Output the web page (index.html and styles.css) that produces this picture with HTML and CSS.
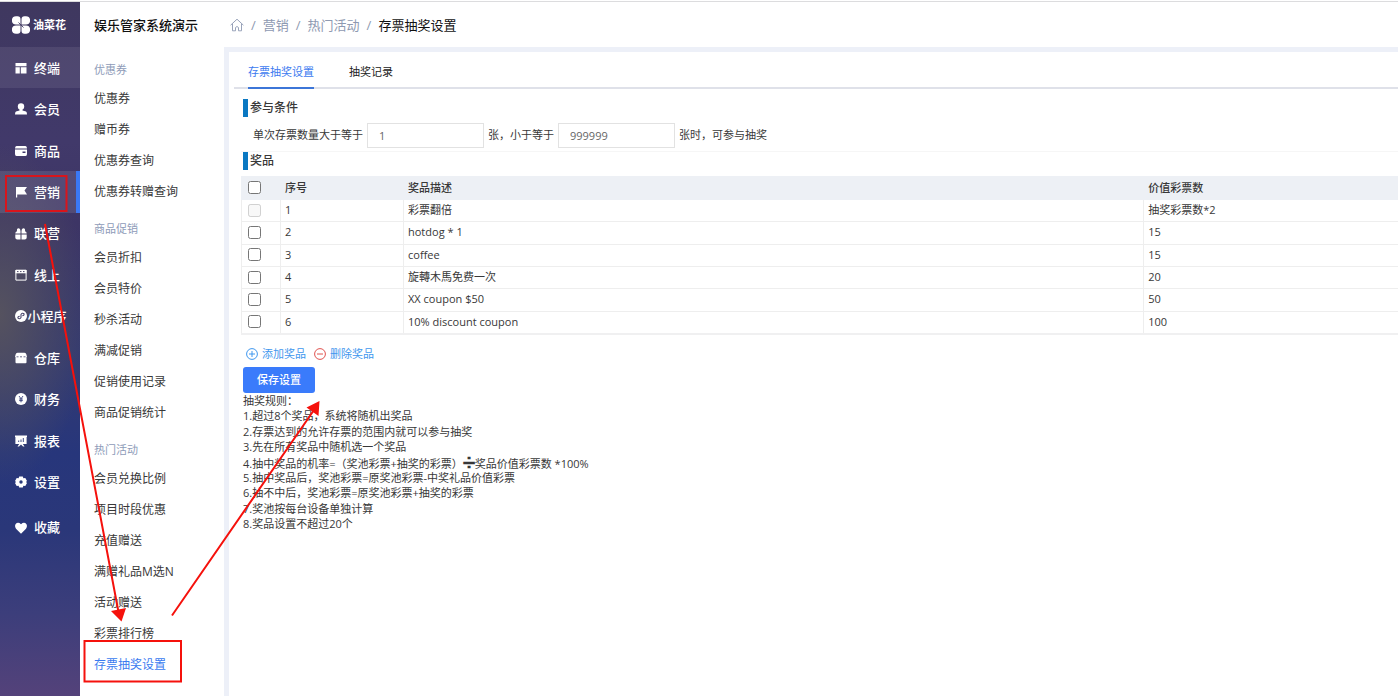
FILE: index.html
```html
<!DOCTYPE html>
<html lang="zh-CN">
<head>
<meta charset="utf-8">
<title>存票抽奖设置</title>
<link rel="stylesheet" href="styles.css">
</head>
<body>
<div class="app">
  <aside class="rail">
    <div class="brand">
      <svg class="brand-mark" viewBox="0 0 18 18" fill="#fff" aria-hidden="true"><path d="M4 .3h1.500A3 3 0 0 1 8.500 3.300V8.500H4A4 4 0 0 1 4 .3zM9.500 8.500V3.300a3 3 0 0 1 3-3H14a4 4 0 0 1 0 8.200zM8.500 9.500v5.200a3 3 0 0 1-3 3H4a4 4 0 0 1 0-8.200zM9.500 9.500H14a4 4 0 0 1 0 8.200h-1.500a3 3 0 0 1-3-3z"/><path d="M6.500 6.500l5 5" stroke="#413a63" stroke-width=".9"/></svg>
      <span>油菜花</span>
    </div>
    <nav>
      <ul class="rail-list">
        <li><a class="rail-item is-hover" href="#"><svg viewBox="0 0 12 12" fill="#fff"><path d="M.5 1h11v3.200H.5zM.5 5.200h4.300v6.300H.5zM5.800 5.200h5.700v6.300H5.800z"/></svg><span>终端</span></a></li>
        <li><a class="rail-item" href="#"><svg viewBox="0 0 12 12" fill="#fff"><circle cx="6" cy="3.400" r="3.200"/><path d="M4.500 5h3v2.500l3.500 1q1 .5 1 2.900H0Q0 9 1 8.500l3.500-1z"/></svg><span>会员</span></a></li>
        <li><a class="rail-item" href="#"><svg viewBox="0 0 12 12"><path d="M1.500 1h9Q12 1.200 12 3.500H0Q0 1.200 1.500 1zM0 4.500h12V9q0 2-1.500 2h-9Q0 11 0 9z" fill="#fff"/><path d="M7.500 6.500h3V8h-3z" fill="#41386a"/></svg><span>商品</span></a></li>
        <li><a class="rail-item is-active" href="#"><svg viewBox="0 0 12 12" fill="#fff"><path d="M1 1h1.200v10.500H1zM2 1h10L9.500 4.500 12 8.500H2z"/></svg><span>营销</span></a></li>
        <li><a class="rail-item" href="#"><svg viewBox="0 0 12 12" fill="#fff"><path d="M5.500 5.500H.3Q.3 3.600 2 3.300 1.500.3 3.600.3 5.500.5 5.500 3zM6.500 5.500h5.200q0-1.900-1.700-2.200Q10.500.3 8.400.3 6.500.5 6.500 3zM.3 6.500h5.200v5H2.300q-2 0-2-2zM6.500 6.500h5.200v3q0 2-2 2H6.500z"/></svg><span>联营</span></a></li>
        <li><a class="rail-item" href="#"><svg viewBox="0 0 12 12"><path d="M.9 1.200h10.200v9.900H.9z" fill="none" stroke="#fff"/><path d="M.5 1h11v3.300H.5z" fill="#fff"/><path d="M2 2.600h1.500M5 2.600h1.500M8 2.600h1.500" stroke="#4a4668"/></svg><span>线上</span></a></li>
        <li><a class="rail-item" href="#"><svg viewBox="0 0 12 12"><circle cx="6" cy="6" r="6" fill="#fff"/><path d="M4.700 6.200Q2.500 6.500 3 8.200 4.700 9.600 6 7.500V4.500Q7.200 2.500 9 3.800 9.400 5.500 7.300 5.800" fill="none" stroke="#48456b" stroke-width="1.100"/></svg><span>小程序</span></a></li>
        <li><a class="rail-item" href="#"><svg viewBox="0 0 12 12"><path d="M2.500.8h7Q11 .8 11.400 2.500L12 5h-.5v5.300q0 1-1 1h-9q-1 0-1-1V5H0L.6 2.500Q1 .8 2.500.8z" fill="#fff"/><path d="M1.500 4.800h2M5 4.800h2M8.500 4.800h2" stroke="#45446f" stroke-width=".8"/></svg><span>仓库</span></a></li>
        <li><a class="rail-item" href="#"><svg viewBox="0 0 12 12"><circle cx="6" cy="6" r="6" fill="#fff"/><path d="M4 3l2 2.800L8 3M6 5.800V9.300M4.200 6h3.600M4.200 7.600h3.600" fill="none" stroke="#343d78" stroke-width=".9"/></svg><span>财务</span></a></li>
        <li><a class="rail-item" href="#"><svg viewBox="0 0 12 12"><path d="M0 .5h12V2h-.4v7H7.800l1.700 2.500H8L6 9.500l-2 2H2.500L4.200 9H.4V2H0z" fill="#fff"/><path d="M3.700 5.500V7M6 4.500V7M8.300 3v4" stroke="#2c3b7b" stroke-width=".9"/></svg><span>报表</span></a></li>
        <li><a class="rail-item" href="#"><svg viewBox="0 0 12 12"><path d="M4.200.5h3.600l.6 1.700 1.900-.3L12 5l-1 1 1 1-1.700 3.100-1.900-.3-.6 1.700H4.200l-.6-1.700-1.900.3L0 7l1-1-1-1 1.700-3.100 1.900.3z" fill="#fff"/><circle cx="6" cy="6" r="1.700" fill="#29397b"/></svg><span>设置</span></a></li>
      </ul>
      <a class="rail-item rail-fav" href="#"><svg viewBox="0 0 12 12" fill="#fff"><path d="M6 11.700L1 6.700Q-.6 4.500.5 2.300 2.800-.6 6 2.200 9.200-.6 11.500 2.300 12.600 4.500 11 6.700z"/></svg><span>收藏</span></a>
    </nav>
  </aside>

  <aside class="menu">
    <h1 class="menu-title">娱乐管家系统演示</h1>
    <nav>
      <section class="menu-group">
        <h2>优惠券</h2>
        <a href="#">优惠券</a><a href="#">赠币券</a><a href="#">优惠券查询</a><a href="#">优惠券转赠查询</a>
      </section>
      <section class="menu-group">
        <h2>商品促销</h2>
        <a href="#">会员折扣</a><a href="#">会员特价</a><a href="#">秒杀活动</a><a href="#">满减促销</a><a href="#">促销使用记录</a><a href="#">商品促销统计</a>
      </section>
      <section class="menu-group">
        <h2>热门活动</h2>
        <a href="#">会员兑换比例</a><a href="#">项目时段优惠</a><a href="#">充值赠送</a><a href="#">满赠礼品M选N</a><a href="#">活动赠送</a><a href="#">彩票排行榜</a><a class="is-current" href="#">存票抽奖设置</a>
      </section>
    </nav>
  </aside>

  <div class="page">
    <nav class="crumbs" aria-label="面包屑">
      <a href="#" aria-label="首页"><svg viewBox="0 0 14 14" fill="none" stroke="#99a3ba"><path d="M.6 7.200L7 1.200l6.400 6M2.500 6v6.800h3V9.500q1.500-2 3 0v3.300h3V6"/></svg></a>
      <i>/</i><a href="#">营销</a><i>/</i><a href="#">热门活动</a><i>/</i><b>存票抽奖设置</b>
    </nav>
    <main class="panel">
      <nav class="tabs">
        <a class="tab is-on" href="#">存票抽奖设置</a>
        <a class="tab" href="#">抽奖记录</a>
      </nav>
      <form class="form">
        <h3 class="sec">参与条件</h3>
        <div class="cond">
          <label for="min">单次存票数量大于等于</label>
          <input id="min" type="text" value="1">
          <label for="max">张，小于等于</label>
          <input id="max" type="text" value="999999">
          <span>张时，可参与抽奖</span>
        </div>
        <h3 class="sec">奖品</h3>
        <table class="prizes">
          <colgroup><col class="c-check"><col class="c-no"><col class="c-desc"><col></colgroup>
          <thead>
            <tr><th><input type="checkbox" aria-label="全选"></th><th>序号</th><th>奖品描述</th><th>价值彩票数</th></tr>
          </thead>
          <tbody>
            <tr><td><input type="checkbox" aria-label="选择 1" disabled></td><td>1</td><td>彩票翻倍</td><td>抽奖彩票数*2</td></tr>
            <tr><td><input type="checkbox" aria-label="选择 2"></td><td>2</td><td>hotdog * 1</td><td>15</td></tr>
            <tr><td><input type="checkbox" aria-label="选择 3"></td><td>3</td><td>coffee</td><td>15</td></tr>
            <tr><td><input type="checkbox" aria-label="选择 4"></td><td>4</td><td>旋轉木馬免费一次</td><td>20</td></tr>
            <tr><td><input type="checkbox" aria-label="选择 5"></td><td>5</td><td>XX coupon $50</td><td>50</td></tr>
            <tr><td><input type="checkbox" aria-label="选择 6"></td><td>6</td><td>10% discount coupon</td><td>100</td></tr>
          </tbody>
        </table>
        <div class="acts">
          <button type="button" class="act"><svg viewBox="0 0 12 12" fill="none" stroke="#3f97ee"><circle cx="6" cy="6" r="5.400"/><path d="M3 6h6M6 3v6"/></svg>添加奖品</button>
          <button type="button" class="act"><svg viewBox="0 0 12 12" fill="none" stroke="#e0524f"><circle cx="6" cy="6" r="5.400"/><path d="M3 6h6"/></svg>删除奖品</button>
        </div>
        <button type="button" class="save">保存设置</button>
        <div class="rules">
          <p>抽奖规则：</p>
          <p>1.超过8个奖品，系统将随机出奖品</p>
          <p>2.存票达到的允许存票的范围内就可以参与抽奖</p>
          <p>3.先在所有奖品中随机选一个奖品</p>
          <p>4.抽中奖品的机率=（奖池彩票+抽奖的彩票）<span class="div">➗&#xFE0E;</span>奖品价值彩票数 *100%</p>
          <p>5.抽中奖品后，奖池彩票=原奖池彩票-中奖礼品价值彩票</p>
          <p>6.抽不中后，奖池彩票=原奖池彩票+抽奖的彩票</p>
          <p>7.奖池按每台设备单独计算</p>
          <p>8.奖品设置不超过20个</p>
        </div>
      </form>
    </main>
  </div>
</div>
<svg class="marks" width="340" height="690" viewBox="0 0 340 690" fill="none" stroke="#f5110c" stroke-width="2" aria-hidden="true">
  <path d="M6 176h60.500v35H6z" stroke="#d8151c"/>
  <path d="M84.500 641h96.500v40.500H84.500z"/>
  <path d="M45 224L118.500 612M172 615.500L314 410"/>
  <path d="M111 611l15-3-4.500 13.500zM319.500 401l-1 15-12-8.500z" fill="#f5110c" stroke="none"/>
</svg>
</body>
</html>
```
FILE: styles.css
```css
* { box-sizing: border-box; }

body {
  position: relative;
  margin: 0;
  padding-top: 1px;
  background: #fff;
  color: #383838;
  font: 11px/1.4 "Open Sans", "Noto Sans CJK SC", sans-serif;
}

a { color: inherit; text-decoration: none; }
h1, h2, h3, p, ul { margin: 0; padding: 0; }
input, button { font: inherit; }

.app {
  display: flex;
  min-height: calc(100vh - 1px);
  border-top: 1px solid #dcdcde;
}

/* Main navigation */
.rail {
  flex: 0 0 80px;
  color: #fff;
  background:
    radial-gradient(ellipse 90px 170px at 0 45%, #55525f 0, #55525f00 100%),
    linear-gradient(#3f385f 0, #41396a 20%, #3d3565 32%, #343a70 50%, #27367b 65%, #2a3779 76%, #3c3e7b 88%, #54427a 100%);
}

.brand {
  display: flex;
  align-items: center;
  gap: 3px;
  height: 45px;
  padding-left: 12px;
  font-weight: 700;
}

.brand-mark { width: 18px; height: 18px; }

.rail-list {
  display: grid;
  grid-auto-rows: 1fr;
  min-height: 456px;
  list-style: none;
}

.rail-item {
  display: flex;
  align-items: center;
  height: 100%;
  padding-left: 15px;
  font-size: 13px;
  font-weight: 500;
}

.rail-item svg { width: 12px; height: 12px; }
.rail-item span { width: 40px; text-align: center; white-space: nowrap; }
.rail-item.is-hover { background: #ffffff14; }
.rail-item.is-active { background: #ffffff1c; border-right: 4px solid #3a78f5; }
.rail-item.rail-fav { height: 41px; margin-top: 4px; }

/* Section menu */
.menu { flex: 0 0 144px; padding-left: 14px; }

.menu-title {
  height: 54px;
  color: #111;
  font-size: 13px;
  font-weight: 500;
  line-height: 46px;
}

.menu-group { display: flex; flex-direction: column; margin-bottom: 8px; }
.menu-group h2 { color: #8e9bb8; font-size: 11px; font-weight: 400; line-height: 27px; }
.menu-group a { font-size: 12px; line-height: 31px; }
.menu-group .is-current { color: #3a7bf0; }

/* Content */
.page { flex: 1; min-width: 0; display: flex; flex-direction: column; }

.crumbs {
  display: flex;
  align-items: center;
  gap: 7px;
  height: 46px;
  margin-bottom: -1px;
  padding-left: 6px;
  color: #8e99b1;
  font-size: 13px;
}

.crumbs svg { display: block; width: 14px; height: 14px; }
.crumbs i { font-style: normal; }
.crumbs b { color: #111; font-weight: 400; }

.panel {
  flex: 1;
  padding-left: 5px;
  border: solid #edf0f8;
  border-width: 5px 0 0 5px;
}

.tabs {
  display: flex;
  gap: 35px;
  height: 37px;
  padding-left: 14px;
  border-bottom: 2px solid #dfe1e9;
}

.tab { height: 37px; line-height: 40px; color: #222; }
.tab.is-on { color: #3d7bf0; border-bottom: 2px solid #3c76d8; }

.form { padding: 10px 0 0 7px; }

.sec {
  margin-left: 2px;
  padding-left: 2px;
  border-left: 5px solid #0a78c2;
  font-size: 12px;
  font-weight: 500;
  line-height: 18px;
}

.cond {
  display: flex;
  align-items: center;
  gap: 4px;
  height: 35px;
  padding: 2px 0 0 12px;
  border-bottom: 1px solid #f6f6f6;
}

.cond input {
  width: 117px;
  height: 25px;
  padding: 0 11px;
  border: 1px solid #e2e2e2;
  color: #666;
}

.prizes {
  width: 100%;
  height: 159px;
  margin: 6px 0 1px;
  table-layout: fixed;
  border-collapse: collapse;
  border-bottom: 2px solid #f0f0f1;
}

.c-check { width: 39px; }
.c-no { width: 123px; }
.c-desc { width: 64%; }

.prizes th, .prizes td {
  padding: 0 4px 1px;
  border: 1px solid #eee;
  border-right: 0;
  text-align: left;
  line-height: 16px;
}

.prizes th { height: 23px; background: #edf0f5; border-color: #edf0f5; font-weight: 500; }
.prizes input { display: block; width: 13px; height: 13px; margin: 0 0 0 2px; }

.acts { display: flex; gap: 8px; height: 31px; padding: 5px 0 0 5px; }

.act {
  display: flex;
  align-items: center;
  gap: 4px;
  padding: 0;
  border: 0;
  background: none;
  color: #3f97ee;
}

.act svg { width: 12px; height: 12px; }

.save {
  display: block;
  width: 72px;
  height: 26px;
  margin-left: 2px;
  padding: 0;
  border: 0;
  border-radius: 3px;
  background: #3a7bfb;
  color: #fff;
  font-weight: 500;
}

.rules { margin-left: 2px; }
.rules p { height: 1.4em; white-space: nowrap; }
.div { font-family: "DejaVu Sans", sans-serif; font-size: 16px; font-weight: 700; line-height: 1; }

/* Guide arrows drawn over the page */
.marks { position: absolute; top: 0; left: 0; pointer-events: none; }
```
